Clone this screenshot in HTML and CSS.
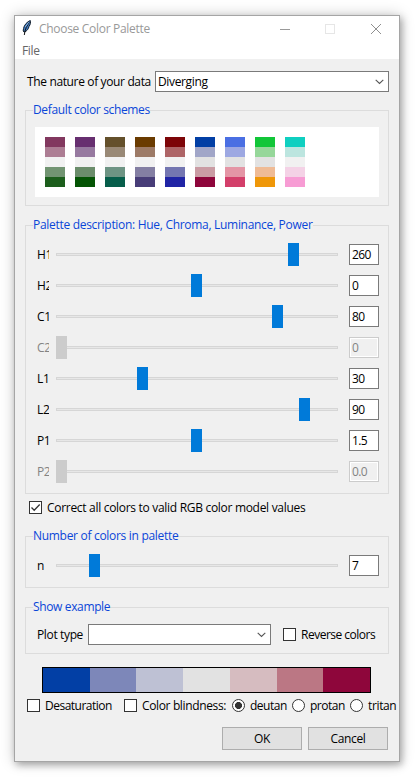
FILE: index.html
```html
<!DOCTYPE html>
<html lang="en">
<head>
<meta charset="utf-8">
<title>Choose Color Palette</title>
<link rel="stylesheet" href="styles.css">
</head>
<body>
<main class="window">
  <header class="titlebar">
    <svg class="feather" width="10" height="16" viewBox="0 0 10 16"><path d="M8.3.5C5.500 1.500 2 5 1.500 8.500L1.200 11l1 1.200C5 11 6.500 9 7 6.500 8.500 4.500 8.800 2 8.300.5Z" fill="#3e7bc4" stroke="#16202c"/><path d="M7.300 2.500C5 5.500 3 9 2.300 15" fill="none" stroke="#111" stroke-width="1"/><path d="M6.800 2.200 3.300 7" stroke="#9cc7f2" fill="none" stroke-width=".8"/></svg>
    <span class="title">Choose Color Palette</span>
    <svg class="controls" width="102" height="12" viewBox="0 0 102 12" fill="none" shape-rendering="crispEdges"><path d="M0 6.500h10" stroke="#999"/><path d="M45.500 1.500h9v9h-9z" stroke="#e6e6e6"/><path d="M91 1l10 10M101 1 91 11" stroke="#8f8f8f" shape-rendering="auto"/></svg>
  </header>
  <nav class="menubar"><span class="menu">File</span></nav>
  <section class="client">
    <div class="nature">
      <span class="nature-label">The nature of your data</span>
      <div class="combo combo-wide"><span class="diverging">Diverging</span><svg class="chevron" width="9" height="6" viewBox="0 0 9 6"><path d="M.7.8 4.500 4.500 8.300.8" fill="none" stroke="#555" stroke-width="1.100"/></svg></div>
    </div>

    <div class="group schemes">
      <span class="legend">Default color schemes</span>
      <div class="canvas">
        <div class="swatch"><i style="background:#82385f"></i><i style="background:#ad7e94"></i><i style="background:#f1f1f1"></i><i style="background:#729472"></i><i style="background:#1c5e1c"></i></div>
        <div class="swatch"><i style="background:#672f70"></i><i style="background:#977aa0"></i><i style="background:#f1f1f1"></i><i style="background:#6b8d6b"></i><i style="background:#045404"></i></div>
        <div class="swatch"><i style="background:#64502b"></i><i style="background:#998976"></i><i style="background:#f1f1f1"></i><i style="background:#6e9484"></i><i style="background:#075e4b"></i></div>
        <div class="swatch"><i style="background:#6a3b00"></i><i style="background:#9d7b67"></i><i style="background:#f1f1f1"></i><i style="background:#847fa3"></i><i style="background:#483d78"></i></div>
        <div class="swatch"><i style="background:#7d0508"></i><i style="background:#ae6567"></i><i style="background:#f1f1f1"></i><i style="background:#7476b1"></i><i style="background:#2024a5"></i></div>
        <div class="swatch"><i style="background:#023fa5"></i><i style="background:#a1a6c8"></i><i style="background:#e2e2e2"></i><i style="background:#ca9ca4"></i><i style="background:#8e063b"></i></div>
        <div class="swatch"><i style="background:#4a6fe3"></i><i style="background:#9da8e2"></i><i style="background:#e2e2e2"></i><i style="background:#e495a5"></i><i style="background:#d33f6a"></i></div>
        <div class="swatch"><i style="background:#11c638"></i><i style="background:#96d79a"></i><i style="background:#e2e2e2"></i><i style="background:#efbb95"></i><i style="background:#ef9708"></i></div>
        <div class="swatch"><i style="background:#0fcfc0"></i><i style="background:#bce5df"></i><i style="background:#f1f1f1"></i><i style="background:#f4d2e6"></i><i style="background:#f79cd4"></i></div>
      </div>
    </div>

    <div class="group description">
      <span class="legend long">Palette description: Hue, Chroma, Luminance, Power</span>
      <div class="slider-row"><span class="name">H1</span><div class="scale"><b class="thumb" style="margin-left:232px"></b></div><span class="entry">260</span></div>
      <div class="slider-row"><span class="name">H2</span><div class="scale"><b class="thumb" style="margin-left:135px"></b></div><span class="entry">0</span></div>
      <div class="slider-row"><span class="name">C1</span><div class="scale"><b class="thumb" style="margin-left:216px"></b></div><span class="entry">80</span></div>
      <div class="slider-row disabled"><span class="name">C2</span><div class="scale"><b class="thumb" style="margin-left:0px"></b></div><span class="entry">0</span></div>
      <div class="slider-row"><span class="name">L1</span><div class="scale"><b class="thumb" style="margin-left:81px"></b></div><span class="entry">30</span></div>
      <div class="slider-row"><span class="name">L2</span><div class="scale"><b class="thumb" style="margin-left:243px"></b></div><span class="entry">90</span></div>
      <div class="slider-row"><span class="name">P1</span><div class="scale"><b class="thumb" style="margin-left:135px"></b></div><span class="entry">1.5</span></div>
      <div class="slider-row disabled"><span class="name">P2</span><div class="scale"><b class="thumb" style="margin-left:0px"></b></div><span class="entry">0.0</span></div>
    </div>

    <div class="correct">
      <span class="check"><svg width="11" height="11" viewBox="0 0 11 11"><path d="M1.500 5.500 4.200 8.300 9.700 2.500" fill="none" stroke="#333" stroke-width="1.300"/></svg></span>
      <span class="long">Correct all colors to valid RGB color model values</span>
    </div>

    <div class="group number">
      <span class="legend long">Number of colors in palette</span>
      <div class="slider-row"><span class="name">n</span><div class="scale"><b class="thumb" style="margin-left:33px"></b></div><span class="entry">7</span></div>
    </div>

    <div class="group example">
      <span class="legend">Show example</span>
      <div class="example-row">
        <span class="plot-label">Plot type</span>
        <div class="combo combo-plot"><svg class="chevron" width="9" height="6" viewBox="0 0 9 6"><path d="M.7.8 4.500 4.500 8.300.8" fill="none" stroke="#555" stroke-width="1.100"/></svg></div>
        <span class="check check-reverse"></span>
        <span class="tight">Reverse colors</span>
      </div>
    </div>

    <div class="palette"><i style="background:#023fa5"></i><i style="background:#7d87b9"></i><i style="background:#bec1d4"></i><i style="background:#e2e2e2"></i><i style="background:#d6bcc0"></i><i style="background:#bb7784"></i><i style="background:#8e063b"></i></div>

    <div class="options">
      <span class="check"></span><span class="option desaturation tight">Desaturation</span>
      <span class="check"></span><span class="option blindness">Color blindness:</span>
      <span class="radio selected"></span><span class="option deutan tight">deutan</span>
      <span class="radio"></span><span class="option protan tight">protan</span>
      <span class="radio"></span><span class="option tritan">tritan</span>
    </div>

    <div class="buttons"><button>OK</button><button>Cancel</button></div>
  </section>
</main>
</body>
</html>
```
FILE: styles.css
```css
* { box-sizing: border-box; }
body {
  margin: 0;
  height: 782px;
  padding: 15px 0 0 14px;
  overflow: hidden;
  background: #fff;
  font: 12px/15px "Open Sans", "Noto Sans", sans-serif;
  letter-spacing: -0.36px;
  color: #000;
  white-space: nowrap;
}
i, b { display: block; }
.long, .title { letter-spacing: -0.3px; }
.tight { letter-spacing: -0.5px; }
.window {
  width: 386px;
  height: 747px;
  border: 1px solid #a5a5a5;
  background: #fff;
  box-shadow: 2px 3px 7px rgba(0, 0, 0, .28), 0 0 14px rgba(0, 0, 0, .2);
}
.titlebar { display: flex; align-items: center; height: 25px; padding: 0 17px 0 7px; }
.feather { margin-top: -2px; }
.title { margin-left: 7px; color: #999; }
.controls { margin-left: auto; }
.menubar { display: flex; align-items: center; height: 18px; padding: 1px 0 0 7px; color: #666; }
.client { height: 702px; padding: 12px 10px 0; background: #f0f0f0; }

.nature { display: flex; align-items: center; height: 21px; padding-left: 2px; }
.nature-label { width: 128px; }
.combo {
  display: flex;
  align-items: center;
  height: 21px;
  padding: 0 4px 0 2px;
  border: 1px solid #7a7a7a;
  background: #fff;
}
.chevron { margin-left: auto; }
.combo-wide { width: 234px; }
.combo-plot { width: 183px; }

.group { position: relative; width: 364px; border: 1px solid #dcdcdc; }
.legend {
  position: absolute;
  top: -9px;
  left: 7px;
  background: #f0f0f0;
  color: #0a46d8;
}
.schemes { height: 96px; margin-top: 18px; padding: 16px 9px; }
.canvas { display: flex; gap: 10px; height: 70px; padding: 10px; background: #fff; }
.swatch { width: 20px; }
.swatch i { height: 10px; }

.description { height: 269px; margin-top: 19px; padding-top: 17px; }
.slider-row { display: flex; align-items: center; height: 23px; margin-bottom: 8px; padding-left: 11px; }
.name { width: 12px; margin-right: 7px; overflow: hidden; }
.scale {
  width: 282px;
  height: 23px;
  background:
    linear-gradient(#e7e7e7, #e7e7e7) 1px 11px / 280px 1px no-repeat,
    linear-gradient(#d6d6d6, #d6d6d6) 0 10px / 282px 3px no-repeat;
}
.thumb { width: 11px; height: 23px; background: #007ad9; }
.entry {
  width: 30px;
  height: 21px;
  margin-left: 11px;
  padding: 2px 0 0 2px;
  border: 1px solid #7a7a7a;
  background: #fff;
  letter-spacing: -0.6px;
}
.disabled { color: #838383; }
.disabled .thumb { background: #ccc; }
.disabled .entry { border-color: #ccc; background: #f0f0f0; box-shadow: inset 0 0 0 1px #fff; }

.check { flex: none; width: 13px; height: 13px; border: 1px solid #333; background: #fff; }
.check svg { display: block; }
.correct { display: flex; align-items: center; height: 13px; margin-top: 7px; padding-left: 4px; gap: 5px; }
.number { height: 52px; margin-top: 22px; padding-top: 17px; }
.example { height: 47px; margin-top: 19px; padding-top: 16px; }
.example-row { display: flex; align-items: center; height: 21px; padding-left: 11px; }
.plot-label { width: 51px; }
.check-reverse { margin: 0 5px 0 12px; }

.palette { display: flex; width: 329px; height: 26px; margin: 13px 0 0 17px; border: 1px solid #000; }
.palette i { flex: 1; }
.options { display: flex; align-items: center; height: 13px; margin-top: 6px; padding-left: 2px; }
.option { flex: none; margin-left: 5px; }
.desaturation { width: 79px; }
.blindness { width: 90px; }
.deutan { width: 42px; }
.protan { width: 40px; }
.tritan { width: 29px; }
.radio {
  flex: none;
  width: 13px;
  height: 13px;
  border: 1px solid #333;
  border-radius: 50%;
  background: #fff;
}
.selected { background: radial-gradient(circle, #333 3.2px, #fff 3.8px); }
.buttons { display: flex; gap: 6px; margin: 15px 0 0 197px; }
button {
  width: 80px;
  height: 23px;
  padding: 0;
  border: 1px solid #adadad;
  background: #e1e1e1;
  color: #000;
  font: inherit;
  letter-spacing: inherit;
}
```
